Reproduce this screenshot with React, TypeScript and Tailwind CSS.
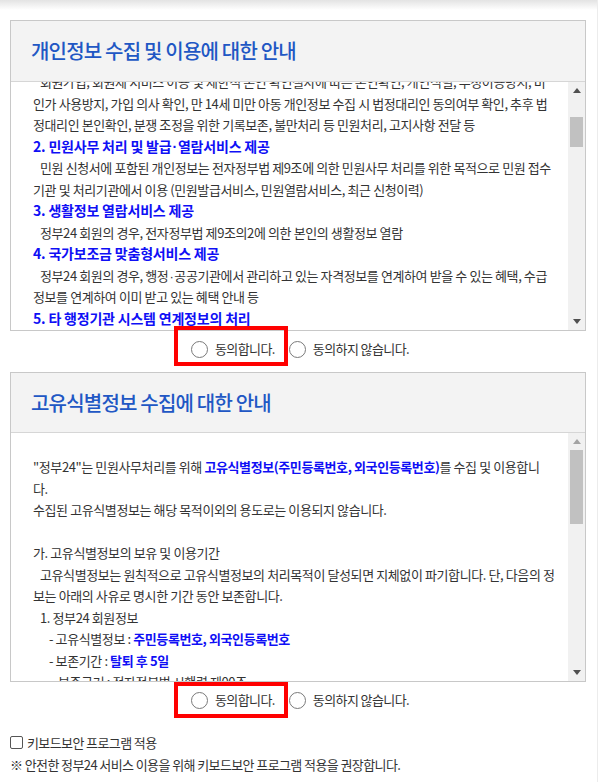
import React from "react";

const FONT = "font-['Noto_Sans_CJK_KR','Noto_Sans',sans-serif]";

function Tri({ up, color }: { up?: boolean; color: string }) {
  return (
    <svg width="8" height="5" viewBox="0 0 8 5">
      {up ? <polygon points="0,5 8,5 4,0" fill={color} /> : <polygon points="0,0 8,0 4,5" fill={color} />}
    </svg>
  );
}

function Scrollbar({ thumbTop, thumbH, upColor }: { thumbTop: number; thumbH: number; upColor: string }) {
  return (
    <div className="w-[17px] bg-[#f1f1f1] flex flex-col shrink-0">
      <div className="h-[17px] flex items-center justify-center">
        <Tri up color={upColor} />
      </div>
      <div className="flex-1 relative">
        <div className="absolute left-[2px] right-[2px] bg-[#c1c1c1]" style={{ top: thumbTop, height: thumbH }} />
      </div>
      <div className="h-[17px] flex items-center justify-center">
        <Tri color="#505050" />
      </div>
    </div>
  );
}

function Line({ children, className = "" }: { children?: React.ReactNode; className?: string }) {
  return <div className={"whitespace-nowrap h-[21.5px] leading-[21.5px] " + className}>{children}</div>;
}

function H({ children }: { children: React.ReactNode }) {
  return <Line className="text-[#0f0ff5] font-bold text-[14px] tracking-[-0.2px]">{children}</Line>;
}

function B({ children }: { children: React.ReactNode }) {
  return <span className="text-[#0f0ff5] font-bold">{children}</span>;
}

function Dot() {
  return <span className="font-['Liberation_Sans',sans-serif] mx-[1px]">·</span>;
}

function Radio({ label }: { label: string }) {
  return (
    <div className="flex items-center gap-[7px]">
      <span className="w-[17px] h-[17px] rounded-full border border-[#7a7a7a] bg-white" />
      <span className="text-[13px] text-[#333] tracking-[-0.6px]">{label}</span>
    </div>
  );
}

function RadioRow({ redTop, redH }: { redTop: number; redH: number }) {
  return (
    <div className="h-[36px] flex items-center justify-center pl-[3px]">
      <div className="relative">
        <Radio label="동의합니다." />
        <div
          className="absolute border-[4px] border-[#ff0000] left-[-17px] right-[-13px]"
          style={{ top: redTop, height: redH }}
        />
      </div>
      <div className="ml-[14px]">
        <Radio label="동의하지 않습니다." />
      </div>
    </div>
  );
}

export default function App() {
  return (
    <div className={"w-[598px] h-[782px] bg-white overflow-hidden border-r border-[#ececec] " + FONT}>
      <div className="h-[10px] bg-gradient-to-b from-[#e3e3e3] to-white" />
      {/* Box 1 */}
      <div className="mt-[10px] ml-[10px] w-[576px] border border-[#c8c8c8]">
        <div className="h-[61px] bg-[#f3f3f3] border-b border-[#d6d6d6] flex items-center pl-[20px]">
          <h2 className="text-[20px] font-medium text-[#2157c4] tracking-[-0.8px]">개인정보 수집 및 이용에 대한 안내</h2>
        </div>
        <div className="h-[248px] flex">
          <div className="flex-1 overflow-hidden pl-[22px] text-[13px] text-[#333] tracking-[-0.4px]">
            <div className="mt-[-11px]">
              <Line className="pl-[7px]">회원가입, 회원제 서비스 이용 및 제한적 본인 확인절차에 따른 본인확인, 개인식별, 부정이용방지, 비</Line>
              <Line>인가 사용방지, 가입 의사 확인, 만 14세 미만 아동 개인정보 수집 시 법정대리인 동의여부 확인, 추후 법</Line>
              <Line>정대리인 본인확인, 분쟁 조정을 위한 기록보존, 불만처리 등 민원처리, 고지사항 전달 등</Line>
              <H>
                2. 민원사무 처리 및 발급<Dot />열람서비스 제공
              </H>
              <Line className="pl-[7px]">민원 신청서에 포함된 개인정보는 전자정부법 제9조에 의한 민원사무 처리를 위한 목적으로 민원 접수</Line>
              <Line>기관 및 처리기관에서 이용 (민원발급서비스, 민원열람서비스, 최근 신청이력)</Line>
              <H>3. 생활정보 열람서비스 제공</H>
              <Line className="pl-[7px]">정부24 회원의 경우, 전자정부법 제9조의2에 의한 본인의 생활정보 열람</Line>
              <H>4. 국가보조금 맞춤형서비스 제공</H>
              <Line className="pl-[7px]">
                정부24 회원의 경우, 행정<Dot />공공기관에서 관리하고 있는 자격정보를 연계하여 받을 수 있는 혜택, 수급
              </Line>
              <Line>정보를 연계하여 이미 받고 있는 혜택 안내 등</Line>
              <H>5. 타 행정기관 시스템 연계정보의 처리</H>
              <Line className="pl-[7px]">행정기관 시스템과 연계하여 민원처리에 필요한 정보를 확인</Line>
            </div>
          </div>
          <Scrollbar thumbTop={18} thumbH={30} upColor="#505050" />
        </div>
      </div>
      <RadioRow redTop={-13} redH={40} />
      {/* Box 2 */}
      <div className="mt-[5px] ml-[10px] w-[576px] border border-[#c8c8c8]">
        <div className="h-[60px] bg-[#f3f3f3] border-b border-[#d6d6d6] flex items-center pl-[20px]">
          <h2 className="text-[20px] font-medium text-[#2157c4] tracking-[-0.8px]">고유식별정보 수집에 대한 안내</h2>
        </div>
        <div className="h-[248px] flex">
          <div className="flex-1 overflow-hidden pl-[22px] text-[13px] text-[#333] tracking-[-0.4px]">
            <div className="pt-[23px]">
              <Line>
                "정부24"는 민원사무처리를 위해 <B>고유식별정보(주민등록번호, 외국인등록번호)</B>를 수집 및 이용합니
              </Line>
              <Line>다.</Line>
              <Line>수집된 고유식별정보는 해당 목적이외의 용도로는 이용되지 않습니다.</Line>
              <Line />
              <Line>가. 고유식별정보의 보유 및 이용기간</Line>
              <Line className="pl-[7px]">고유식별정보는 원칙적으로 고유식별정보의 처리목적이 달성되면 지체없이 파기합니다. 단, 다음의 정</Line>
              <Line>보는 아래의 사유로 명시한 기간 동안 보존합니다.</Line>
              <Line className="pl-[7px]">1. 정부24 회원정보</Line>
              <Line className="pl-[16px]">
                - 고유식별정보 : <B>주민등록번호, 외국인등록번호</B>
              </Line>
              <Line className="pl-[16px]">
                - 보존기간 : <B>탈퇴 후 5일</B>
              </Line>
              <Line className="pl-[25px]">보존근거 : 전자정부법 시행령 제00조</Line>
            </div>
          </div>
          <Scrollbar thumbTop={0} thumbH={74} upColor="#a3a3a3" />
        </div>
      </div>
      <RadioRow redTop={-8} redH={36} />
      <div className="mt-[14px] text-[13px] text-[#333] tracking-[-0.6px]">
        <div className="flex items-center h-[21.5px] pl-[10px] gap-[4px]">
          <span className="w-[13px] h-[13px] rounded-[2px] border border-[#555] bg-white" />
          <span>키보드보안 프로그램 적용</span>
        </div>
        <div className="h-[21.5px] leading-[21.5px] pl-[10px]">※ 안전한 정부24 서비스 이용을 위해 키보드보안 프로그램 적용을 권장합니다.</div>
      </div>
    </div>
  );
}
